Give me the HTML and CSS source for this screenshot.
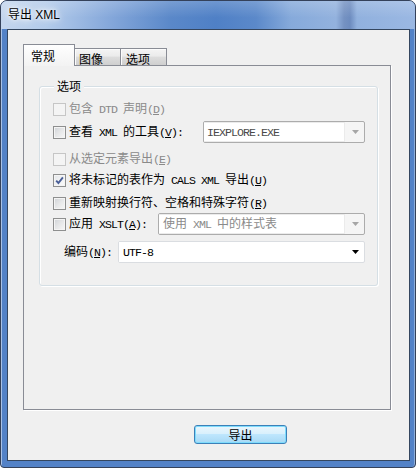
FILE: index.html
```html
<!DOCTYPE html>
<html lang="zh-CN">
<head>
<meta charset="utf-8">
<title>导出 XML</title>
<link rel="stylesheet" href="styles.css">
</head>
<body>
<div class="window">
  <div class="titlebar"><span class="title">导出 XML</span></div>
  <div class="client">
    <div class="tabs">
      <div class="tab tab-active">常规</div>
      <div class="tab tab-b">图像</div>
      <div class="tab tab-c">选项</div>
    </div>
    <div class="panel">
      <div class="group">
        <div class="legend">选项</div>
        <div class="row r1 disabled">
          <span class="cb cb-dis"></span>
          <span class="label">包含<span class="m"> DTD </span>声明<span class="m">(<u>D</u>)</span></span>
        </div>
        <div class="row r2">
          <span class="cb"></span>
          <span class="label">查看<span class="m"> XML </span>的工具<span class="m">(<u>V</u>):</span></span>
          <div class="combo combo-tool">
            <span class="field"><span class="txt"><span class="m">IEXPLORE.EXE</span></span></span>
            <span class="drop"><svg width="7" height="4" viewBox="0 0 7 4"><path d="M0 0h7L3.5 4z" fill="#a6a6a6"/></svg></span>
          </div>
        </div>
        <div class="row r3 disabled">
          <span class="cb cb-dis"></span>
          <span class="label">从选定元素导出<span class="m">(<u>E</u>)</span></span>
        </div>
        <div class="row r4">
          <span class="cb cb-on"><svg width="9" height="9" viewBox="0 0 9 9"><path d="M1.2 4.6 L3.4 7 L7.9 1.3" fill="none" stroke="#4a5f97" stroke-width="1.9"/></svg></span>
          <span class="label">将未标记的表作为<span class="m"> CALS XML </span>导出<span class="m">(<u>U</u>)</span></span>
        </div>
        <div class="row r5">
          <span class="cb"></span>
          <span class="label">重新映射换行符、空格和特殊字符<span class="m">(<u>R</u>)</span></span>
        </div>
        <div class="row r6">
          <span class="cb"></span>
          <span class="label">应用<span class="m"> XSLT(<u>A</u>):</span></span>
          <div class="combo combo-xslt">
            <span class="field field-dis"><span class="txt">使用<span class="m"> XML </span>中的样式表</span></span>
            <span class="drop"><svg width="7" height="4" viewBox="0 0 7 4"><path d="M0 0h7L3.5 4z" fill="#a6a6a6"/></svg></span>
          </div>
        </div>
        <div class="row r7">
          <span class="label">编码<span class="m">(<u>N</u>):</span></span>
          <div class="combo combo-enc">
            <span class="field field-enc"><span class="txt"><span class="m">UTF-8</span></span></span>
            <span class="drop"><svg width="7" height="4" viewBox="0 0 7 4"><path d="M0 0h7L3.5 4z" fill="#000"/></svg></span>
          </div>
        </div>
      </div>
    </div>
    <div class="actions"><button class="btn" type="button">导出</button></div>
  </div>
</div>
</body>
</html>
```
FILE: styles.css
```css
html, body {
  margin: 0;
  padding: 0;
  background: #ffffff;
}
body {
  width: 416px;
  height: 468px;
  overflow: hidden;
  font-family: "Noto Sans CJK SC", "Noto Sans", sans-serif;
  font-size: 12px;
  line-height: 14px;
  color: #000;
}
.window {
  width: 416px;
  height: 468px;
  box-sizing: border-box;
  border: 1px solid #34415a;
  border-radius: 7px 7px 4px 4px;
  background: #5382c7;
  box-shadow: inset 1px 1px 0 #a9c2e6, inset -1px 0 0 #8eaedb;
  display: flex;
  flex-direction: column;
  overflow: hidden;
}
.titlebar {
  height: 28px;
  flex: none;
  padding-left: 7px;
  display: flex;
  align-items: center;
  background:
    linear-gradient(to bottom, rgba(255,255,255,0.18), rgba(255,255,255,0) 60%),
    linear-gradient(to right, #c4d6ee 0px, #b3cbea 45px, #84a7da 110px, #5a88c9 170px, #4f80c6 215px, #5b89ca 255px, #86aadb 290px, #93b2de 335px, #7592c2 343px, #6d8cbf 349px, #91b1de 356px, #9bb8e3 416px);
}
.title {
  font-family: "Liberation Sans", "Noto Sans CJK SC", sans-serif;
  font-size: 12px;
  line-height: 14px;
  margin-top: -1px;
  color: #000;
  text-shadow: 0 0 6px #fff, 0 0 10px #fff, 0 0 3px rgba(255,255,255,0.8);
}
.client {
  flex: 1;
  margin: 0 5px 6px 6px;
  border: 1px solid #34465f;
  background: #f0f0f0;
  padding: 14px 0 0 15px;
  display: flex;
  flex-direction: column;
}
.m {
  font-family: "Liberation Mono", monospace;
  font-size: 11.6px;
  letter-spacing: -0.96px;
}
u {
  text-decoration: underline;
  text-underline-offset: 1px;
}
.tabs {
  display: flex;
  align-items: flex-end;
  height: 21px;
}
.tab {
  box-sizing: border-box;
  border: 1px solid #898c95;
  border-bottom: none;
  height: 17px;
  line-height: 15px;
  padding-top: 2px;
  background: linear-gradient(to bottom, #f4f4f4 0%, #ebebeb 45%, #dddddd 50%, #cfcfcf 100%);
  box-shadow: inset 1px 1px 0 #fcfcfc;
}
.tab-active {
  position: relative;
  z-index: 1;
  width: 52px;
  height: 22px;
  margin-bottom: -1px;
  padding: 4px 0 0 7px;
  line-height: 14px;
  background: linear-gradient(to bottom, #fefefe, #f3f3f3);
  box-shadow: none;
}
.tab-b {
  width: 46px;
  border-left: none;
  padding-left: 4px;
}
.tab-c {
  width: 46px;
  border-left: none;
  padding-left: 5px;
}
.panel {
  width: 368px;
  height: 345px;
  box-sizing: border-box;
  border: 1px solid #898c95;
  box-shadow: 1px 1px 0 #ffffff;
  background: #f0f0f0;
  padding: 20px 0 0 15px;
}
.group {
  width: 339px;
  height: 200px;
  box-sizing: border-box;
  border: 1px solid #d5dfe5;
  border-radius: 3px;
  box-shadow: 1px 1px 0 #ffffff, inset 1px 1px 0 #ffffff;
  padding: 0 12px 0 13px;
  display: flex;
  flex-direction: column;
}
.legend {
  align-self: flex-start;
  margin: -8px 0 0 1px;
  padding: 0 3px;
  height: 14px;
  background: #f0f0f0;
}
.row {
  display: flex;
  align-items: center;
  height: 20px;
  flex: none;
}
.r1 { margin-top: 6px; }
.r2 { margin-top: 2px; height: 22px; }
.r3 { margin-top: 6px; }
.r4 { margin-top: 1px; }
.r5 { margin-top: 3px; }
.r6 { margin-top: 0; height: 22px; }
.r7 { margin-top: 6px; height: 22px; padding-left: 11px; }
.disabled { color: #8a8a8a; }
.cb {
  width: 13px;
  height: 13px;
  flex: none;
  box-sizing: border-box;
  border: 1px solid #8e8f8f;
  background: linear-gradient(135deg, #cfd2d6 0%, #e6e7e8 50%, #f7f7f7 100%);
  box-shadow: inset 0 0 0 1px #f4f4f4;
  margin-right: 3px;
  display: flex;
  align-items: center;
  justify-content: center;
}
.cb-dis {
  border-color: #c6c6c6;
  background: #f4f4f4;
  box-shadow: none;
}
.cb-on {
  background: linear-gradient(135deg, #e3e6ea 0%, #f1f2f3 50%, #fbfbfb 100%);
}
.label {
  white-space: nowrap;
}
.combo {
  margin-left: auto;
  height: 22px;
  box-sizing: border-box;
  border: 1px solid #acacac;
  border-radius: 2px;
  background: #f5f5f5;
  display: flex;
  align-items: stretch;
}
.combo-tool { width: 162px; }
.combo-xslt { width: 207px; }
.combo-enc {
  width: 247px;
  background: #ffffff;
  border-color: #dadde1;
}
.field {
  width: 141px;
  box-sizing: border-box;
  background: #ffffff;
  border: 1px solid #ebebeb;
  border-left: none;
  margin: 0;
  padding-left: 3px;
  display: flex;
  align-items: center;
  color: #4a4a4a;
  white-space: nowrap;
}
.txt {
  white-space: pre;
}
.field-dis {
  width: 186px;
  color: #8a8a8a;
  padding-left: 4px;
}
.field-enc {
  width: 226px;
  border: none;
  color: #000;
  padding-left: 4px;
}
.drop {
  flex: 1;
  display: flex;
  align-items: center;
  justify-content: center;
  padding-left: 1px;
}
.actions {
  margin-top: 15px;
  padding-left: 171px;
  display: flex;
}
.btn {
  width: 93px;
  height: 19px;
  box-sizing: border-box;
  border: 1px solid #3c80b8;
  border-radius: 3px;
  padding: 0;
  font-family: "Noto Sans CJK SC", sans-serif;
  font-size: 12px;
  line-height: 16px;
  color: #000;
  background: linear-gradient(to bottom, #eaf6fd 0%, #d9f0fc 45%, #bee6fd 50%, #a7d9f5 100%);
  box-shadow: inset 0 0 0 1px #7fdcfc;
}
```
